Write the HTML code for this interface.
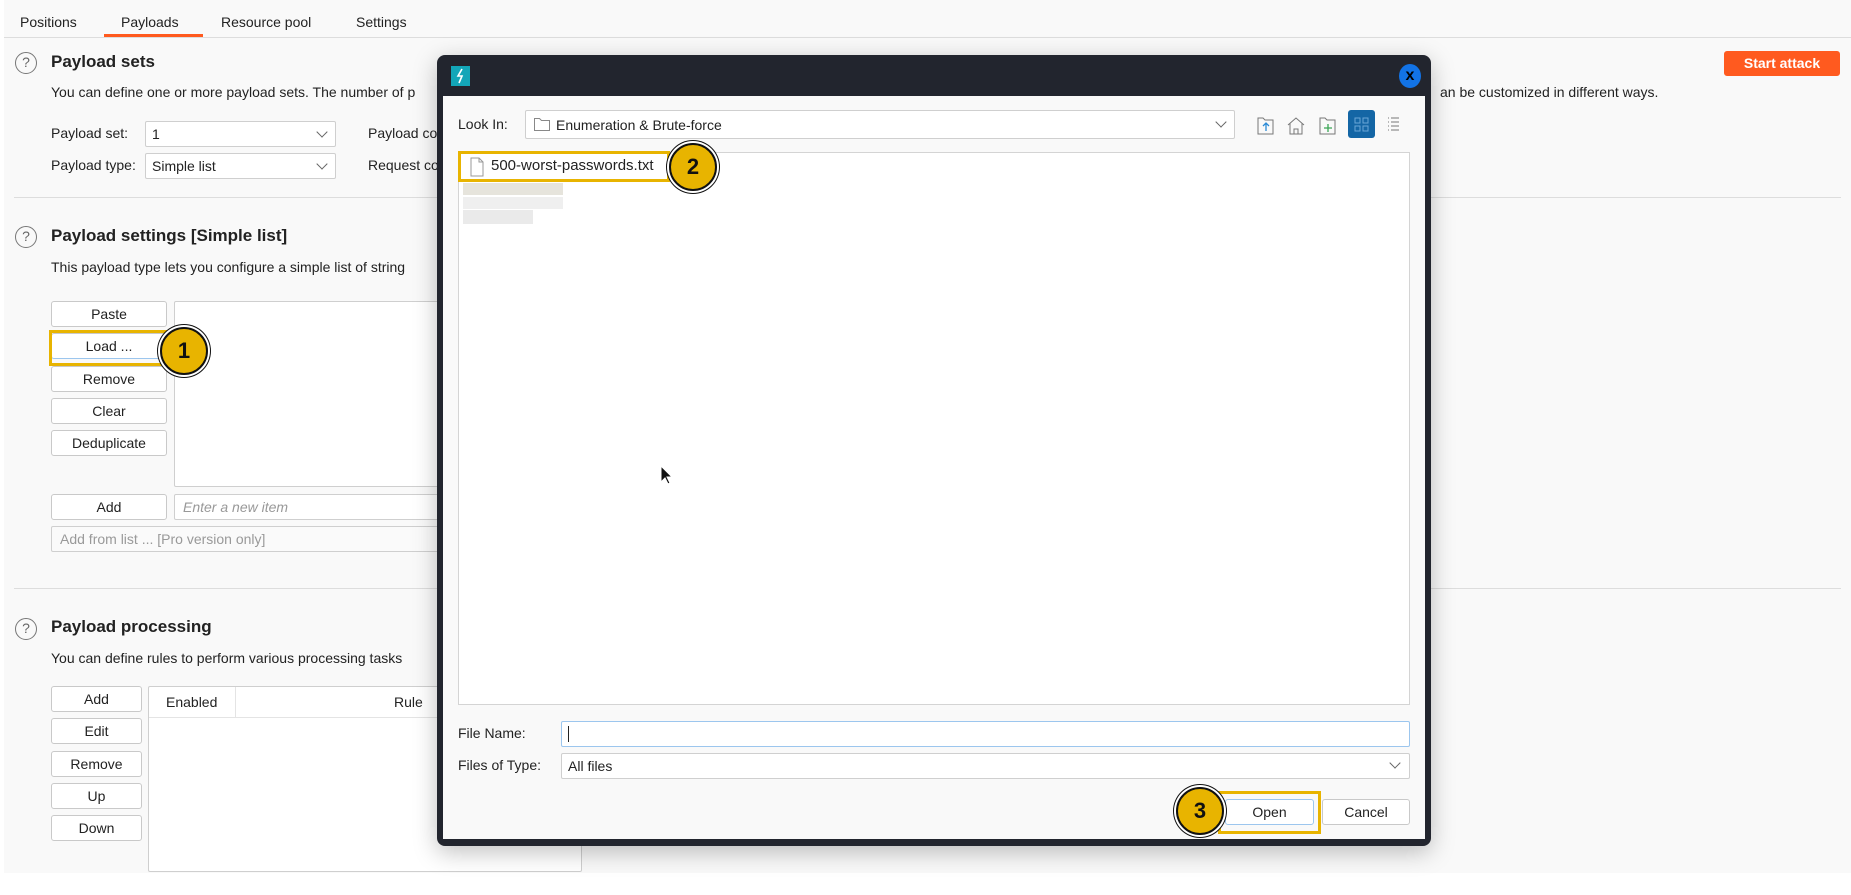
<!DOCTYPE html>
<html><head><meta charset="utf-8"><style>
*{box-sizing:border-box;margin:0;padding:0}
body{width:1851px;height:895px;background:#fff;font-family:"Liberation Sans",sans-serif;font-size:14px;color:#222;position:relative;overflow:hidden}
.a{position:absolute}
.page{left:4px;top:0;width:1847px;height:873px;background:#f9f9f9}
.btn{position:absolute;background:#fff;border:1px solid #c9c9c9;border-radius:3px;text-align:center;font-size:14px;color:#222}
.in{position:absolute;background:#fff;border:1px solid #cfcfcf;border-radius:2px}
.h{font-weight:bold;font-size:17px}
.q{position:absolute;width:22px;height:22px;border:1.5px solid #777;border-radius:50%;text-align:center;font-size:14px;line-height:19px;color:#666}
.num{position:absolute;width:48px;height:48px;border-radius:50%;background:#e8b400;border:2px solid #111;box-shadow:0 0 0 2px #fff,0 0 0 3px #111;text-align:center;font-weight:bold;font-size:22px;line-height:44px;color:#111}
.ybox{position:absolute;border:3px solid #e8b400}
.chev{position:absolute;width:8px;height:8px;border-right:1.3px solid #666;border-bottom:1.3px solid #666;transform:rotate(45deg)}
</style></head><body>
<div class="a page"></div>
<!-- tabs -->
<div class="a" style="left:4px;top:37px;width:1847px;height:1px;background:#ddd"></div>
<div class="a" style="left:20px;top:14px;font-size:14px">Positions</div>
<div class="a" style="left:121px;top:14px;font-size:14px">Payloads</div>
<div class="a" style="left:221px;top:14px;font-size:14px">Resource pool</div>
<div class="a" style="left:356px;top:14px;font-size:14px">Settings</div>
<div class="a" style="left:104px;top:34px;width:99px;height:3px;background:#ff5a1f"></div>
<div class="btn" style="left:1724px;top:51px;width:116px;height:25px;background:#ff5a1f;border-color:#ff5a1f;color:#fff;font-weight:bold;line-height:23px">Start attack</div>

<div class="q" style="left:15px;top:52px">?</div>
<div class="a h" style="left:51px;top:52px">Payload sets</div>
<div class="a" style="left:51px;top:84px">You can define one or more payload sets. The number of p</div>
<div class="a" style="left:1440px;top:84px">an be customized in different ways.</div>
<div class="a" style="left:51px;top:125px">Payload set:</div>
<div class="in" style="left:145px;top:121px;width:191px;height:26px;padding:4px 6px">1</div>
<div class="chev" style="left:318px;top:128px"></div>
<div class="a" style="left:51px;top:157px">Payload type:</div>
<div class="in" style="left:145px;top:153px;width:191px;height:26px;padding:4px 6px">Simple list</div>
<div class="chev" style="left:318px;top:160px"></div>
<div class="a" style="left:368px;top:125px">Payload co</div>
<div class="a" style="left:368px;top:157px">Request co</div>
<div class="a" style="left:14px;top:197px;width:1827px;height:1px;background:#ddd"></div>

<div class="q" style="left:15px;top:226px">?</div>
<div class="a h" style="left:51px;top:226px">Payload settings [Simple list]</div>
<div class="a" style="left:51px;top:259px">This payload type lets you configure a simple list of string</div>
<div class="btn" style="left:51px;top:301px;width:116px;height:26px;line-height:24px">Paste</div>
<div class="btn" style="left:51px;top:333px;width:116px;height:26px;line-height:24px;border-bottom:1px solid #9cc6ee">Load ...</div>
<div class="btn" style="left:51px;top:366px;width:116px;height:26px;line-height:24px">Remove</div>
<div class="btn" style="left:51px;top:398px;width:116px;height:26px;line-height:24px">Clear</div>
<div class="btn" style="left:51px;top:430px;width:116px;height:26px;line-height:24px">Deduplicate</div>
<div class="in" style="left:174px;top:301px;width:270px;height:186px"></div>
<div class="btn" style="left:51px;top:494px;width:116px;height:26px;line-height:24px">Add</div>
<div class="in" style="left:174px;top:494px;width:270px;height:26px;padding:4px 8px;color:#999;font-style:italic">Enter a new item</div>
<div class="in" style="left:51px;top:526px;width:393px;height:26px;padding:4px 8px;color:#999;background:#fafafa">Add from list ... [Pro version only]</div>
<div class="ybox" style="left:49px;top:330px;width:118px;height:36px"></div>
<div class="num" style="left:160px;top:327px">1</div>
<div class="a" style="left:14px;top:588px;width:1827px;height:1px;background:#ddd"></div>

<div class="q" style="left:15px;top:618px">?</div>
<div class="a h" style="left:51px;top:617px">Payload processing</div>
<div class="a" style="left:51px;top:650px">You can define rules to perform various processing tasks</div>
<div class="btn" style="left:51px;top:686px;width:91px;height:26px;line-height:24px">Add</div>
<div class="btn" style="left:51px;top:718px;width:91px;height:26px;line-height:24px">Edit</div>
<div class="btn" style="left:51px;top:751px;width:91px;height:26px;line-height:24px">Remove</div>
<div class="btn" style="left:51px;top:783px;width:91px;height:26px;line-height:24px">Up</div>
<div class="btn" style="left:51px;top:815px;width:91px;height:26px;line-height:24px">Down</div>
<div class="in" style="left:148px;top:686px;width:434px;height:186px"></div>
<div class="a" style="left:149px;top:717px;width:432px;height:1px;background:#e4e4e4"></div>
<div class="a" style="left:235px;top:687px;width:1px;height:30px;background:#e4e4e4"></div>
<div class="a" style="left:166px;top:694px">Enabled</div>
<div class="a" style="left:394px;top:694px">Rule</div>

<!-- dialog -->
<div class="a" style="left:437px;top:55px;width:994px;height:791px;background:#22252e;border-radius:8px;box-shadow:0 6px 24px rgba(0,0,0,.25)"></div>
<div class="a" style="left:443px;top:96px;width:982px;height:743px;background:#f9f9f9"></div>
<div class="a" style="left:451px;top:66px;width:19px;height:20px;background:#13a6b8"></div>
<svg class="a" style="left:451px;top:66px" width="19" height="20"><path d="M11 3 L7 10 L11 10 L8 17" stroke="#fff" stroke-width="1.6" fill="none"/></svg>
<div class="a" style="left:1399px;top:64px;width:22px;height:24px;border-radius:50%;background:#1273e6;color:#000;font-weight:bold;text-align:center;line-height:23px;font-size:16px">x</div>
<div class="a" style="left:458px;top:116px">Look In:</div>
<div class="in" style="left:525px;top:110px;width:710px;height:29px;padding:6px 0 0 30px">Enumeration &amp; Brute-force</div>
<svg class="a" style="left:533px;top:116px" width="18" height="16"><path d="M1.5 2.5h5l2 2h8v10h-15z" fill="none" stroke="#888" stroke-width="1"/></svg>
<div class="chev" style="left:1217px;top:118px"></div>
<svg class="a" style="left:1255px;top:110px" width="150" height="30">
<path d="M3 8h5l2 2h8v14H3z" fill="none" stroke="#777"/><path d="M11 21v-8M8 16l3-3 3 3" stroke="#2a8ad6" fill="none" stroke-width="1.3"/>
<path d="M33 15l8-7 8 7M35 13v11h12V13M39 24v-5h4v5" fill="none" stroke="#777"/>
<path d="M65 8h5l2 2h8v14H65z" fill="none" stroke="#777"/><path d="M73 14v8M69 18h8" stroke="#3aa655" stroke-width="1.3"/>
<rect x="93" y="0" width="27" height="28" rx="3" fill="#1466a5"/>
<rect x="100" y="8" width="5" height="5" fill="none" stroke="#6aa7d6"/><rect x="108" y="8" width="5" height="5" fill="none" stroke="#6aa7d6"/><rect x="100" y="16" width="5" height="5" fill="none" stroke="#6aa7d6"/><rect x="108" y="16" width="5" height="5" fill="none" stroke="#6aa7d6"/>
<path d="M133 8h1M133 12h1M133 16h1M133 20h1M136 8h8M136 12h8M136 16h8M136 20h8" stroke="#777"/>
</svg>
<div class="a" style="left:458px;top:152px;width:952px;height:553px;background:#fff;border:1px solid #d4d4d4"></div>
<svg class="a" style="left:469px;top:157px" width="16" height="20"><path d="M2 1h8l4 4v14H2z M10 1v4h4" fill="none" stroke="#999"/></svg>
<div class="a" style="left:491px;top:157px;font-size:15px">500-worst-passwords.txt</div>
<div class="a" style="left:463px;top:183px;width:100px;height:12px;background:#e6e4dc"></div>
<div class="a" style="left:463px;top:197px;width:100px;height:12px;background:#efefef"></div>
<div class="a" style="left:463px;top:210px;width:70px;height:14px;background:#eaeaea"></div>
<div class="ybox" style="left:458px;top:151px;width:212px;height:31px"></div>
<div class="num" style="left:669px;top:143px">2</div>
<svg class="a" style="left:660px;top:465px" width="14" height="22"><path d="M1 1v16l4-4 3 6 2-1-3-6h5z" fill="#111" stroke="#fff" stroke-width="1"/></svg>
<div class="a" style="left:458px;top:725px">File Name:</div>
<div class="in" style="left:561px;top:721px;width:849px;height:26px;border:1.5px solid #9cc6ee"></div>
<div class="a" style="left:568px;top:726px;width:1px;height:16px;background:#222"></div>
<div class="a" style="left:458px;top:757px">Files of Type:</div>
<div class="in" style="left:561px;top:753px;width:849px;height:26px;padding:4px 6px">All files</div>
<div class="chev" style="left:1391px;top:759px"></div>
<div class="btn" style="left:1225px;top:799px;width:89px;height:26px;line-height:24px;border-color:#9cc6ee">Open</div>
<div class="btn" style="left:1322px;top:799px;width:88px;height:26px;line-height:24px">Cancel</div>
<div class="ybox" style="left:1218px;top:791px;width:103px;height:43px"></div>
<div class="num" style="left:1176px;top:787px">3</div>
</body></html>
